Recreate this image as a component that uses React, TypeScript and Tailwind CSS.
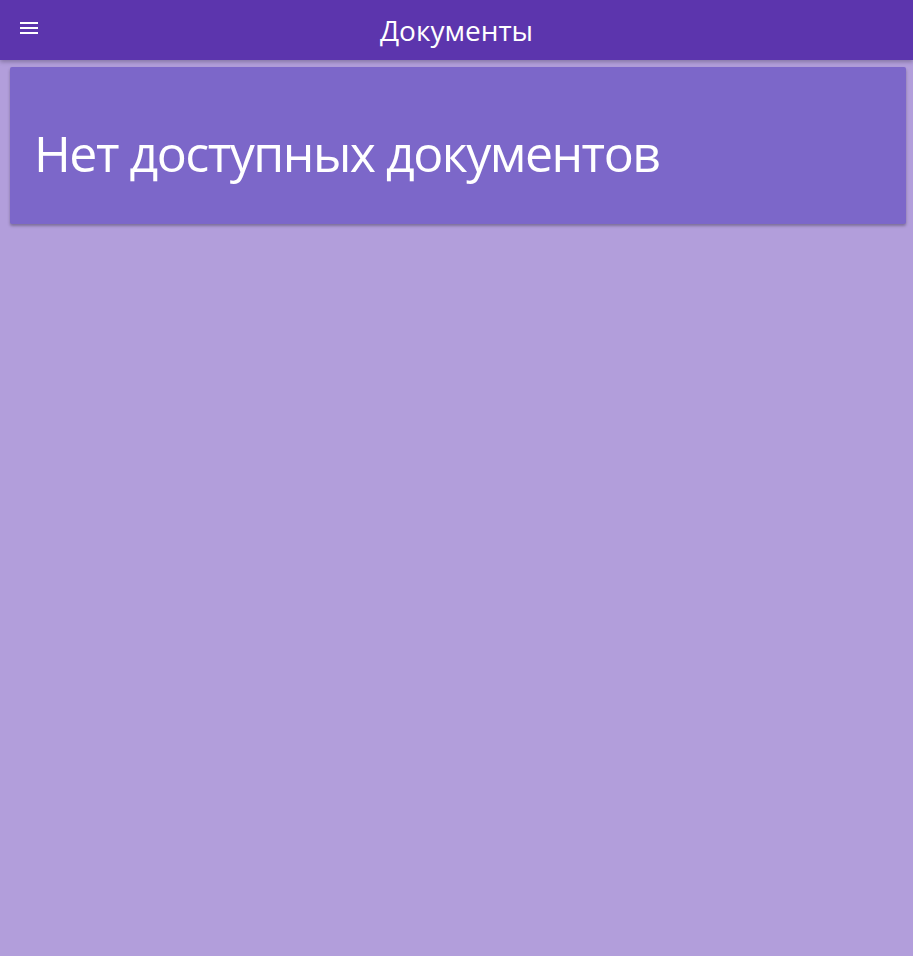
import React from "react";

const App: React.FC = () => {
  return (
    <div className="min-h-screen w-full bg-[#b29edb] font-['Open_Sans',sans-serif]">
      <header className="relative z-10 flex h-[60px] items-center bg-[#5c35ad] shadow-[0_2px_4px_rgba(0,0,0,0.25)]">
        <button className="absolute left-[20px] top-[22px] flex h-[12px] w-[18px] flex-col justify-between">
          <span className="block h-[2px] w-full bg-white" />
          <span className="block h-[2px] w-full bg-white" />
          <span className="block h-[2px] w-full bg-white" />
        </button>
        <h1 className="w-full pb-[1px] text-center text-[28px] leading-none text-white">Документы</h1>
      </header>
      <main className="pl-[10px] pr-[7px] pt-[7px]">
        <div className="flex h-[157px] items-center rounded-[2px] bg-[#7c67c9] px-[24px] pt-[15px] shadow-[0_2px_3px_rgba(0,0,0,0.3)]">
          <p className="text-[50px] leading-none tracking-[-0.03em] text-white">Нет доступных документов</p>
        </div>
      </main>
    </div>
  );
};

export default App;
